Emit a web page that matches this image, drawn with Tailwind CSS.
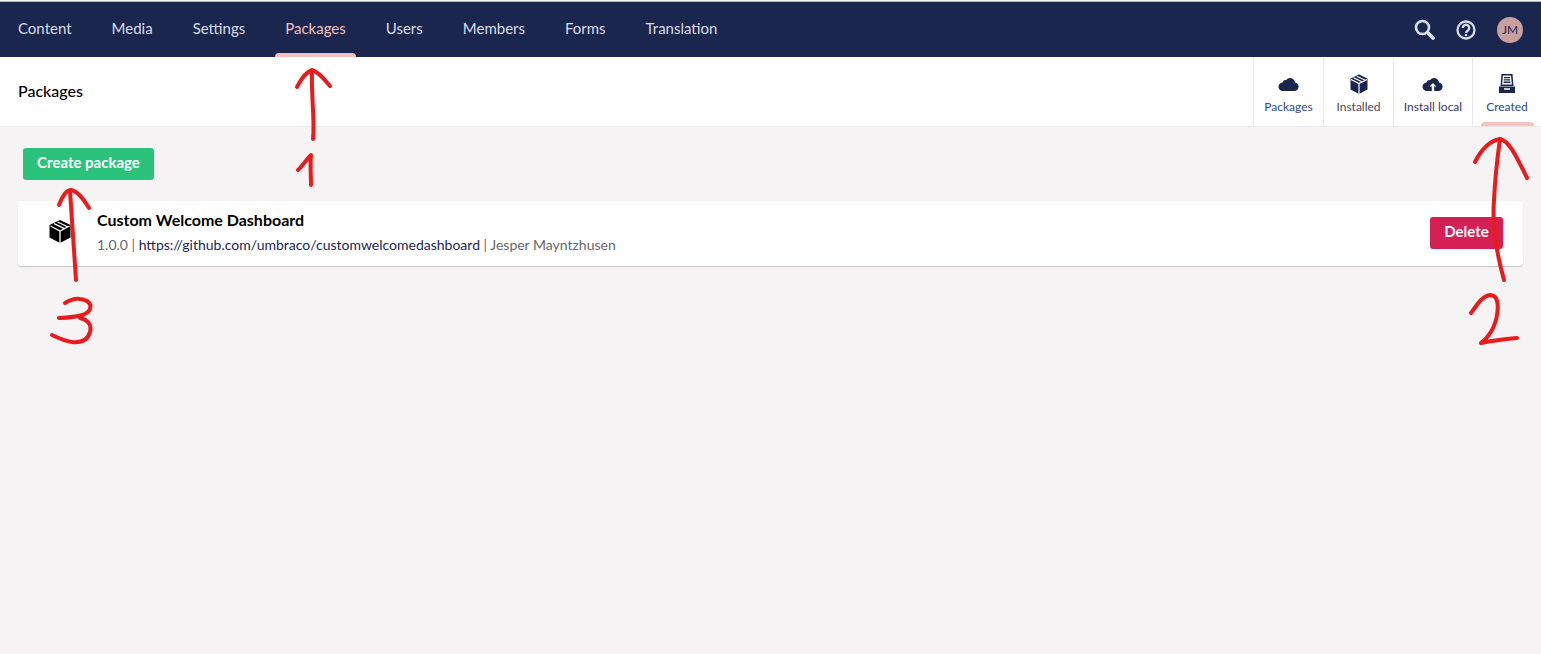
<!doctype html>
<html lang="en">
<head>
<meta charset="utf-8">
<script src="https://cdn.jsdelivr.net/npm/@tailwindcss/browser@4"></script>
</head>
<body class="relative h-[654px] w-[1541px] overflow-hidden bg-[#f5f3f4] font-['Lato',sans-serif] text-black">
<header class="mt-px flex h-14 items-stretch justify-between border-t border-[#b5b5b5] bg-[#1b264f] pl-2 pr-[18px] box-border">
  <nav class="flex gap-5 text-[15px] text-[#d8dde8]">
    <a class="flex items-center px-2.5 pb-0.5">Content</a>
    <a class="flex items-center px-2.5 pb-0.5">Media</a>
    <a class="flex items-center px-2.5 pb-0.5">Settings</a>
    <a class="relative flex items-center px-2.5 pb-0.5 text-[#f5c1bc]">Packages<span class="absolute bottom-0 left-0 right-0 h-1 rounded-t bg-[#f5c1bc]"></span></a>
    <a class="flex items-center px-2.5 pb-0.5">Users</a>
    <a class="flex items-center px-2.5 pb-0.5">Members</a>
    <a class="flex items-center px-2.5 pb-0.5">Forms</a>
    <a class="flex items-center px-2.5 pb-0.5">Translation</a>
  </nav>
  <div class="flex items-center text-[#d8dde8]">
    <svg class="h-[21px] w-[21px]" viewBox="0 0 21 21" fill="none" stroke="currentColor"><circle cx="8.500" cy="8.500" r="6.500" stroke-width="2.600"/><path d="M13.500 13.500l5.500 5.500" stroke-width="3.800" stroke-linecap="round"/></svg>
    <svg class="ml-[21px] h-[20px] w-[20px]" viewBox="0 0 20 20" fill="none" stroke="currentColor"><circle cx="10" cy="10" r="8.500" stroke-width="2.300"/><path d="M6.800 8a3.200 3.200 0 1 1 5 2.600c-1.100.7-1.800 1.100-1.800 2.300" stroke-width="2.300"/><path d="M10 14v2.200" stroke-width="2.400"/></svg>
    <div class="ml-[21px] flex h-[26px] w-[26px] items-center justify-center rounded-full bg-[#c9a0a0] text-[12px] text-[#1b264f]">JM</div>
  </div>
</header>
<section class="flex h-[70px] items-stretch justify-between border-b border-[#e9e9eb] bg-white pl-[18px] box-border">
  <h1 class="flex items-center pb-0.5 text-[16px] font-medium">Packages</h1>
  <div class="flex text-[12px] text-[#1b264f]">
    <a class="flex w-[70px] flex-col items-center border-l border-[#e9e9eb] pt-4 text-[#2b4a80]">
      <svg class="h-[22px] w-[22px] text-[#1b264f]" viewBox="0 0 22 22" fill="currentColor"><path d="M5 18a4.200 4.200 0 0 1-.6-8.400 3 3 0 0 1 3.600-2.400 5 5 0 0 1 9 2.200 4.400 4.400 0 0 1 .2 8.600z"/></svg>
      <span class="mt-1 leading-4">Packages</span>
    </a>
    <a class="flex w-[70px] flex-col items-center border-l border-[#e9e9eb] pt-4 text-[#4a4a5c]">
      <svg class="h-[22px] w-[22px] text-[#1b264f]" viewBox="0 0 22 22" fill="currentColor"><path d="M11 1.500l8.500 4v11L11 21l-8.500-4.500v-11z"/><path d="M5.500 4.700l8.500 4M8.800 3.200l8.500 4M3 6.500L11 10.500l8-4M11 10.500V21" stroke="#fff" stroke-width="1.200" fill="none"/></svg>
      <span class="mt-1 leading-4">Installed</span>
    </a>
    <a class="flex w-[79px] flex-col items-center border-l border-[#e9e9eb] pt-4 text-[#3a3a6a]">
      <svg class="h-[22px] w-[22px] text-[#1b264f]" viewBox="0 0 22 22" fill="currentColor"><path d="M5 18a4.200 4.200 0 0 1-.6-8.400 3 3 0 0 1 3.600-2.400 5 5 0 0 1 9 2.200 4.400 4.400 0 0 1 .2 8.600z"/><path d="M11 10l-3.400 3.600h2.200V18h2.400v-4.400h2.200z" fill="#fff"/></svg>
      <span class="mt-1 leading-4">Install local</span>
    </a>
    <a class="relative flex w-[69px] flex-col items-center border-l border-[#e9e9eb] pt-4 text-[#2b4a80]">
      <svg class="h-[22px] w-[22px] text-[#1b264f]" viewBox="0 0 22 22" fill="currentColor"><path fill-rule="evenodd" d="M5.500 1h11l1 12h-13zM7 2.500L6.100 11.500h9.800L15 2.500zM8 4h6v1.300H8zM7.800 6.300h6.400v1.300H7.800zM7.600 8.600h6.800v1.300H7.600z"/><path fill-rule="evenodd" d="M3 13.500h16V20H3zM8 15.200v1.600h6v-1.600z"/></svg>
      <span class="mt-1 leading-4">Created</span>
      <span class="absolute bottom-0 left-2 h-1 w-[53px] rounded-t bg-[#f5c1bc]"></span>
    </a>
  </div>
</section>
<main class="px-[18px]">
  <div class="pl-[5px] pt-[21px]">
    <button class="h-8 w-[131px] rounded-[3px] bg-[#2bc37c] pb-1 text-[15px] font-bold text-white">Create package</button>
  </div>
  <article class="mt-[21px] flex h-[65px] w-[1505px] items-center rounded-[3px] bg-white shadow-[0_1px_1px_rgba(0,0,0,0.2)]">
    <svg class="ml-[30px] h-6 w-6 shrink-0 -translate-y-[3px]" viewBox="0 0 24 24" fill="#000"><path d="M12 1l10.500 5v12.500L12 24 1.500 18.500V6z"/><path d="M6 4.700l10.500 5M9.500 3l10.500 5M2.500 7L12 12l9.500-5M12 12v12" stroke="#fff" stroke-width="1.300" fill="none"/></svg>
    <div class="ml-[25px] flex-1 -translate-y-[1px]">
      <h2 class="text-[16px] font-bold leading-5">Custom Welcome Dashboard</h2>
      <p class="mt-[5px] text-[14px] leading-5 text-[#68676b]">1.0.0 | <span class="text-[#1b264f]">https://github.com/umbraco/customwelcomedashboard</span> | Jesper Mayntzhusen</p>
    </div>
    <button class="mb-0.5 mr-5 h-8 w-[73px] rounded-[3px] bg-[#d42054] pb-[3px] text-[15px] font-bold text-white">Delete</button>
  </article>
</main>
<svg class="pointer-events-none absolute left-0 top-0" width="1541" height="654" viewBox="0 0 1541 654" fill="none" stroke="#e81c1c" stroke-width="4" stroke-linecap="round" stroke-linejoin="round">
  <path d="M313 139C315 120 311 95 312 71"/>
  <path d="M297 87C301 79 306 72 312 70C319 72 325 80 330 86"/>
  <path d="M298 170C303 165 307 159 311 155C310 165 311 175 311 185"/>
  <path d="M76 280C74 250 72 220 70 191"/>
  <path d="M59 205C62 197 66 190 71 190C78 191 84 200 89 208"/>
  <path d="M65 303C70 300 75 298 80 299C88 300 92 304 90 309C88 314 82 317 59 318"/>
  <path d="M80 318C88 320 92 325 90 332C88 340 82 343 72 342C65 341 58 338 52 335"/>
  <path d="M1504 280C1497 255 1492 225 1494 200C1495 180 1497 160 1500 139"/>
  <path d="M1475 162C1481 150 1489 141 1500 139C1510 141 1518 160 1527 178"/>
  <path d="M1471 313C1477 305 1482 296 1490 295C1497 295 1499 303 1497 315C1495 328 1488 338 1481 343C1490 341 1505 339 1517 338"/>
</svg>
</body>
</html>
